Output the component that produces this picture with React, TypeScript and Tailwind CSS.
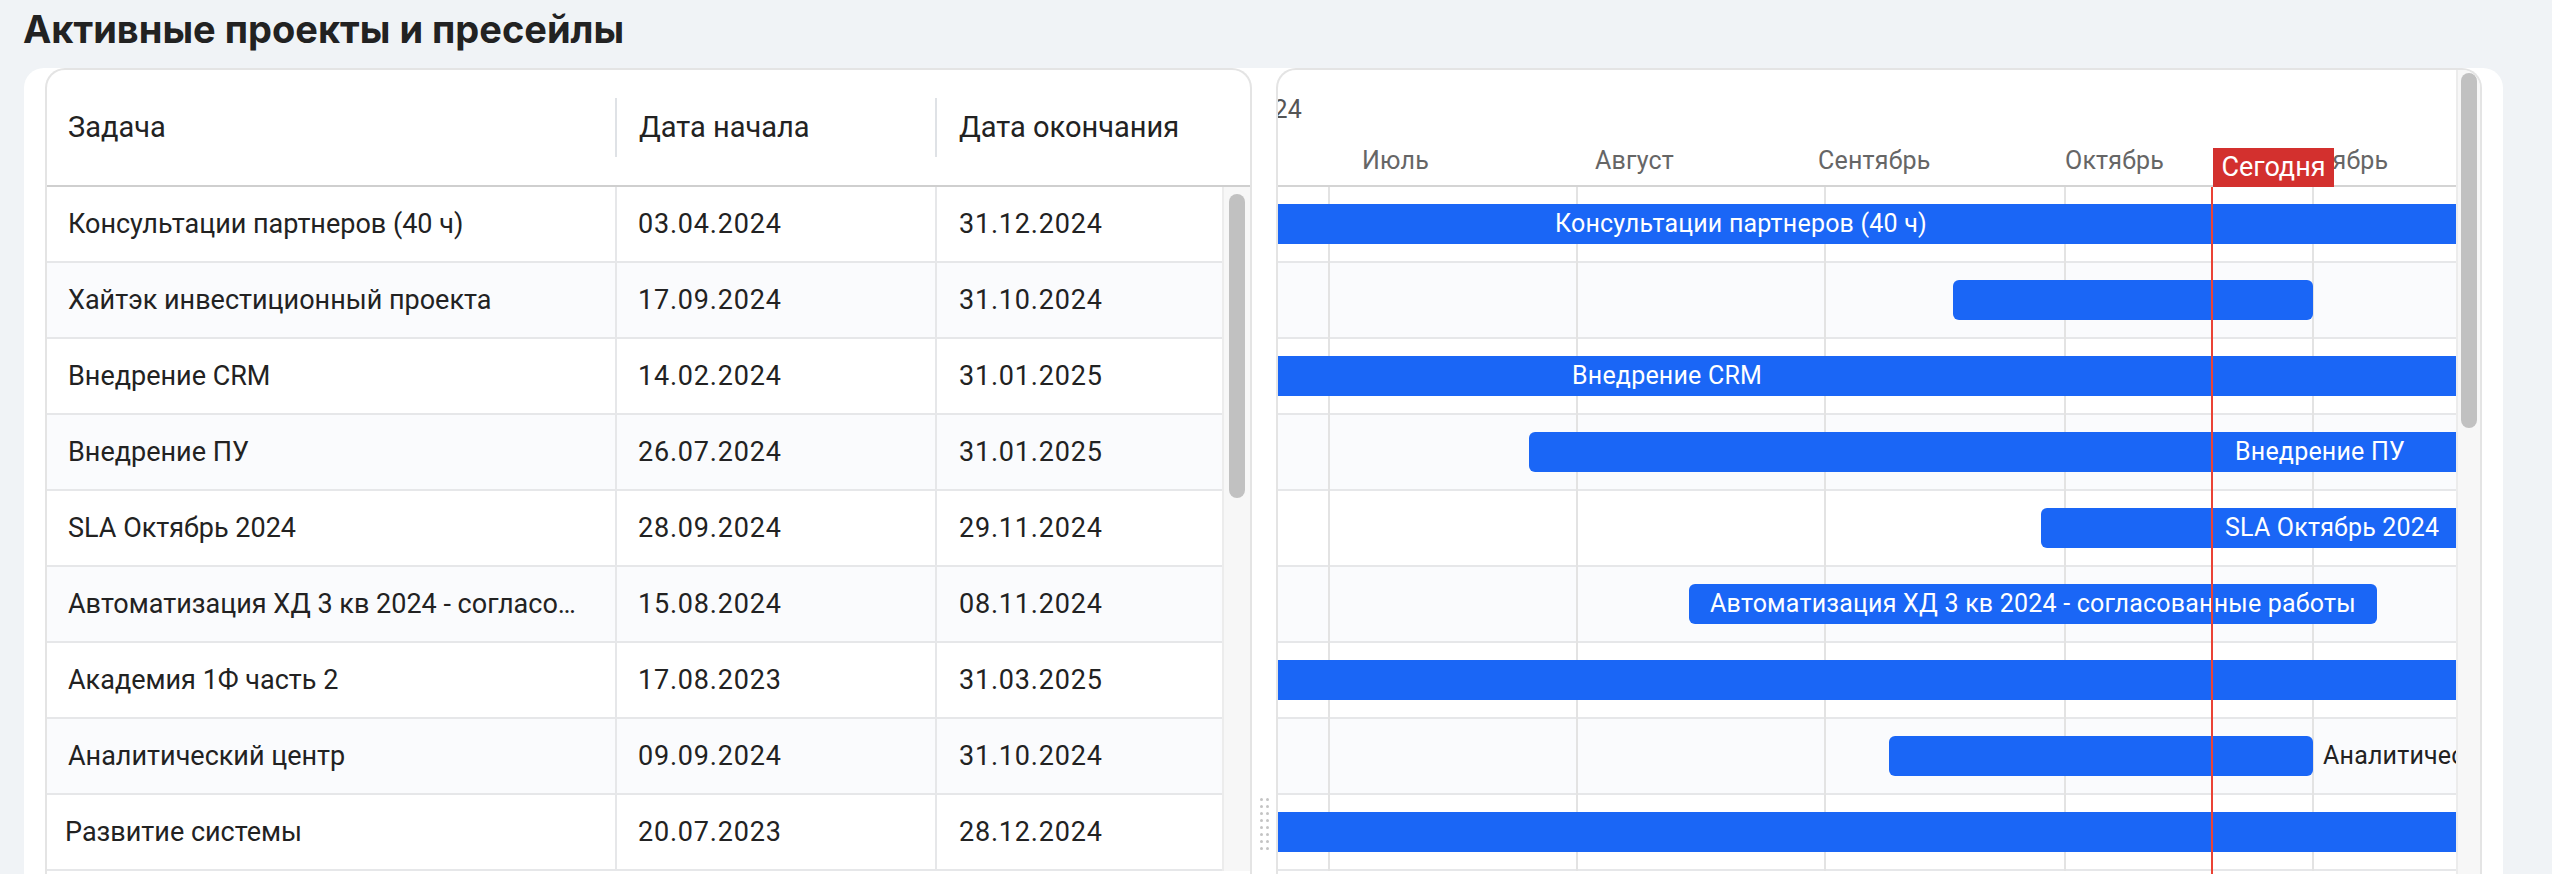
import React from 'react';

// Active projects & presales: task table on the left, gantt timeline on the right.

type Task = {
  name: string;
  start: string;
  end: string;
  // where the bar label goes: 'center' inside the bar, 'at' fixed x, 'after' right of bar, 'none'
  label: 'center' | 'at' | 'after' | 'none';
  labelX?: number;
};

const TASKS: Task[] = [
  { name: 'Консультации партнеров (40 ч)', start: '03.04.2024', end: '31.12.2024', label: 'at', labelX: 277 },
  { name: 'Хайтэк инвестиционный проекта', start: '17.09.2024', end: '31.10.2024', label: 'none' },
  { name: 'Внедрение CRM', start: '14.02.2024', end: '31.01.2025', label: 'at', labelX: 294 },
  { name: 'Внедрение ПУ', start: '26.07.2024', end: '31.01.2025', label: 'at', labelX: 957 },
  { name: 'SLA Октябрь 2024', start: '28.09.2024', end: '29.11.2024', label: 'at', labelX: 947 },
  {
    name: 'Автоматизация ХД 3 кв 2024 - согласованные работы',
    start: '15.08.2024',
    end: '08.11.2024',
    label: 'center',
  },
  { name: 'Академия 1Ф часть 2', start: '17.08.2023', end: '31.03.2025', label: 'none' },
  { name: 'Аналитический центр', start: '09.09.2024', end: '31.10.2024', label: 'after' },
  { name: 'Развитие системы', start: '20.07.2023', end: '28.12.2024', label: 'none' },
];

const DAY = 8; // px per day
const ORIGIN = 51; // x of 1 July 2024 inside the chart
const BASE = Date.UTC(2024, 6, 1);

function dayX(s: string) {
  const [d, m, y] = s.split('.').map(Number);
  return ORIGIN + ((Date.UTC(y, m - 1, d) - BASE) / 86400000) * DAY;
}

const MONTHS = [
  { label: 'Июль', x: 84 },
  { label: 'Август', x: 317 },
  { label: 'Сентябрь', x: 540 },
  { label: 'Октябрь', x: 787 },
  { label: 'Ноябрь', x: 1022 },
];

const GRID = [51, 299, 547, 787, 1035];
const TODAY = 934;

function TaskTable() {
  return (
    <div className="flex flex-col rounded-tl-[20px] rounded-tr-[20px] border-2 border-b-0 border-[#e4e4e4] overflow-hidden bg-white">
      {/* header */}
      <div className="grid grid-cols-[568px_320px_1fr] h-[117px] border-b-2 border-[#cfcfcf] text-[29px] text-[#222]">
        <div className="flex items-center pl-[21px]">Задача</div>
        <div className="flex items-center">
          <div className="w-[2px] h-[59px] bg-[#dfe2e6]" />
          <span className="pl-[22px]">Дата начала</span>
        </div>
        <div className="flex items-center">
          <div className="w-[2px] h-[59px] bg-[#dfe2e6]" />
          <span className="pl-[22px]">Дата окончания</span>
        </div>
      </div>

      {/* body */}
      <div className="flex">
        <div className="flex-1 flex flex-col">
          {TASKS.map((t, i) => (
            <div
              key={t.name}
              className={`grid grid-cols-[568px_320px_1fr] h-[76px] border-b-2 border-[#e6e7e9] text-[27px] text-[#222] ${
                i % 2 === 1 ? 'bg-[#fafbfd]' : 'bg-white'
              }`}
            >
              <div className={`flex items-center min-w-0 pr-[30px] ${i === 8 ? 'pl-[18px]' : 'pl-[21px]'}`}>
                <span className="truncate">{t.name}</span>
              </div>
              <div className="flex items-center pl-[21px] tracking-[0.8px] border-l-2 border-[#e6e7e9]">{t.start}</div>
              <div className="flex items-center pl-[22px] tracking-[0.8px] border-l-2 border-[#e6e7e9]">{t.end}</div>
            </div>
          ))}
        </div>
        {/* scrollbar */}
        <div className="w-[28px] bg-[#f7f7f7] border-l-2 border-[#ececec] pt-[7px] flex justify-center">
          <div className="w-[16px] h-[304px] rounded-full bg-[#c1c1c1]" />
        </div>
      </div>
    </div>
  );
}

function Gantt() {
  return (
    <div className="flex rounded-tl-[20px] rounded-tr-[20px] border-2 border-b-0 border-[#e4e4e4] overflow-hidden bg-white">
      <div className="relative flex-1 flex flex-col overflow-hidden">
        {/* timeline header */}
        <div className="relative h-[117px] border-b-2 border-[#d4d4d4] text-[25px] tracking-[0.2px]">
          <span className="absolute left-[-33px] top-[24px] leading-[32px] text-[#555]">2024</span>
          {MONTHS.map((m) => (
            <span key={m.label} className="absolute top-[75px] leading-[32px] text-[#666]" style={{ left: m.x }}>
              {m.label}
            </span>
          ))}
          <div className="absolute left-[935px] top-[78px] w-[121px] h-[39px] bg-[#d3302e] text-white text-[27px] tracking-normal flex items-center justify-center z-10">
            Сегодня
          </div>
        </div>

        {/* rows */}
        <div className="relative flex flex-col">
          {TASKS.map((t, i) => (
            <div
              key={t.name}
              className={`relative h-[76px] border-b-2 border-[#e6e7e9] ${i % 2 === 1 ? 'bg-[#fafbfd]' : 'bg-white'}`}
            />
          ))}

          {/* month grid lines */}
          {GRID.map((x) => (
            <div key={x} className="absolute top-0 bottom-0 w-[2px] bg-[#e3e3e3]" style={{ left: x - 1 }} />
          ))}

          {/* bars */}
          {TASKS.map((t, i) => {
            const left = dayX(t.start);
            const right = dayX(t.end) + DAY;
            const top = i * 76 + 17;
            return (
              <React.Fragment key={t.name}>
                <div
                  className="absolute h-[40px] rounded-[6px] bg-[#1a66f6] flex items-center justify-center text-[25px] tracking-[0.2px] text-white whitespace-nowrap"
                  style={{ left, top, width: right - left }}
                >
                  {t.label === 'center' ? t.name : null}
                </div>
                {t.label === 'at' && (
                  <span
                    className="absolute h-[40px] flex items-center text-[25px] tracking-[0.2px] text-white whitespace-nowrap"
                    style={{ left: t.labelX, top }}
                  >
                    {t.name}
                  </span>
                )}
                {t.label === 'after' && (
                  <span
                    className="absolute h-[40px] flex items-center text-[25px] tracking-[0.2px] text-[#222] whitespace-nowrap"
                    style={{ left: right + 10, top }}
                  >
                    {t.name}
                  </span>
                )}
              </React.Fragment>
            );
          })}
        </div>

        {/* today marker */}
        <div className="absolute top-[117px] bottom-0 w-[2px] bg-[#ea4335]" style={{ left: TODAY - 1 }} />
      </div>

      {/* scrollbar */}
      <div className="w-[24px] bg-[#f7f7f7] border-l-2 border-[#ececec] pt-[3px] flex justify-center">
        <div className="w-[16px] h-[355px] rounded-full bg-[#c1c1c1]" />
      </div>
    </div>
  );
}

export default function App() {
  return (
    <div className="h-screen overflow-hidden bg-[#f0f3f6] font-['Roboto',sans-serif] pt-[8px]">
      <h1 className="pl-[23px] font-['Inter',sans-serif] text-[38px] leading-[43px] font-bold text-[#222]">
        Активные проекты и пресейлы
      </h1>
      <div className="mt-[17px] ml-[24px] w-[2479px] h-[900px] rounded-t-[20px] bg-white px-[21px] grid grid-cols-[1207px_24px_1206px]">
        <TaskTable />
        {/* splitter handle */}
        <div className="flex justify-center pt-[730px]">
          <div className="grid grid-cols-2 gap-x-[3px] gap-y-[4px] h-fit">
            {Array.from({ length: 16 }).map((_, i) => (
              <div key={i} className="w-[3px] h-[3px] rounded-full bg-[#c4c4c4]" />
            ))}
          </div>
        </div>
        <Gantt />
      </div>
    </div>
  );
}
